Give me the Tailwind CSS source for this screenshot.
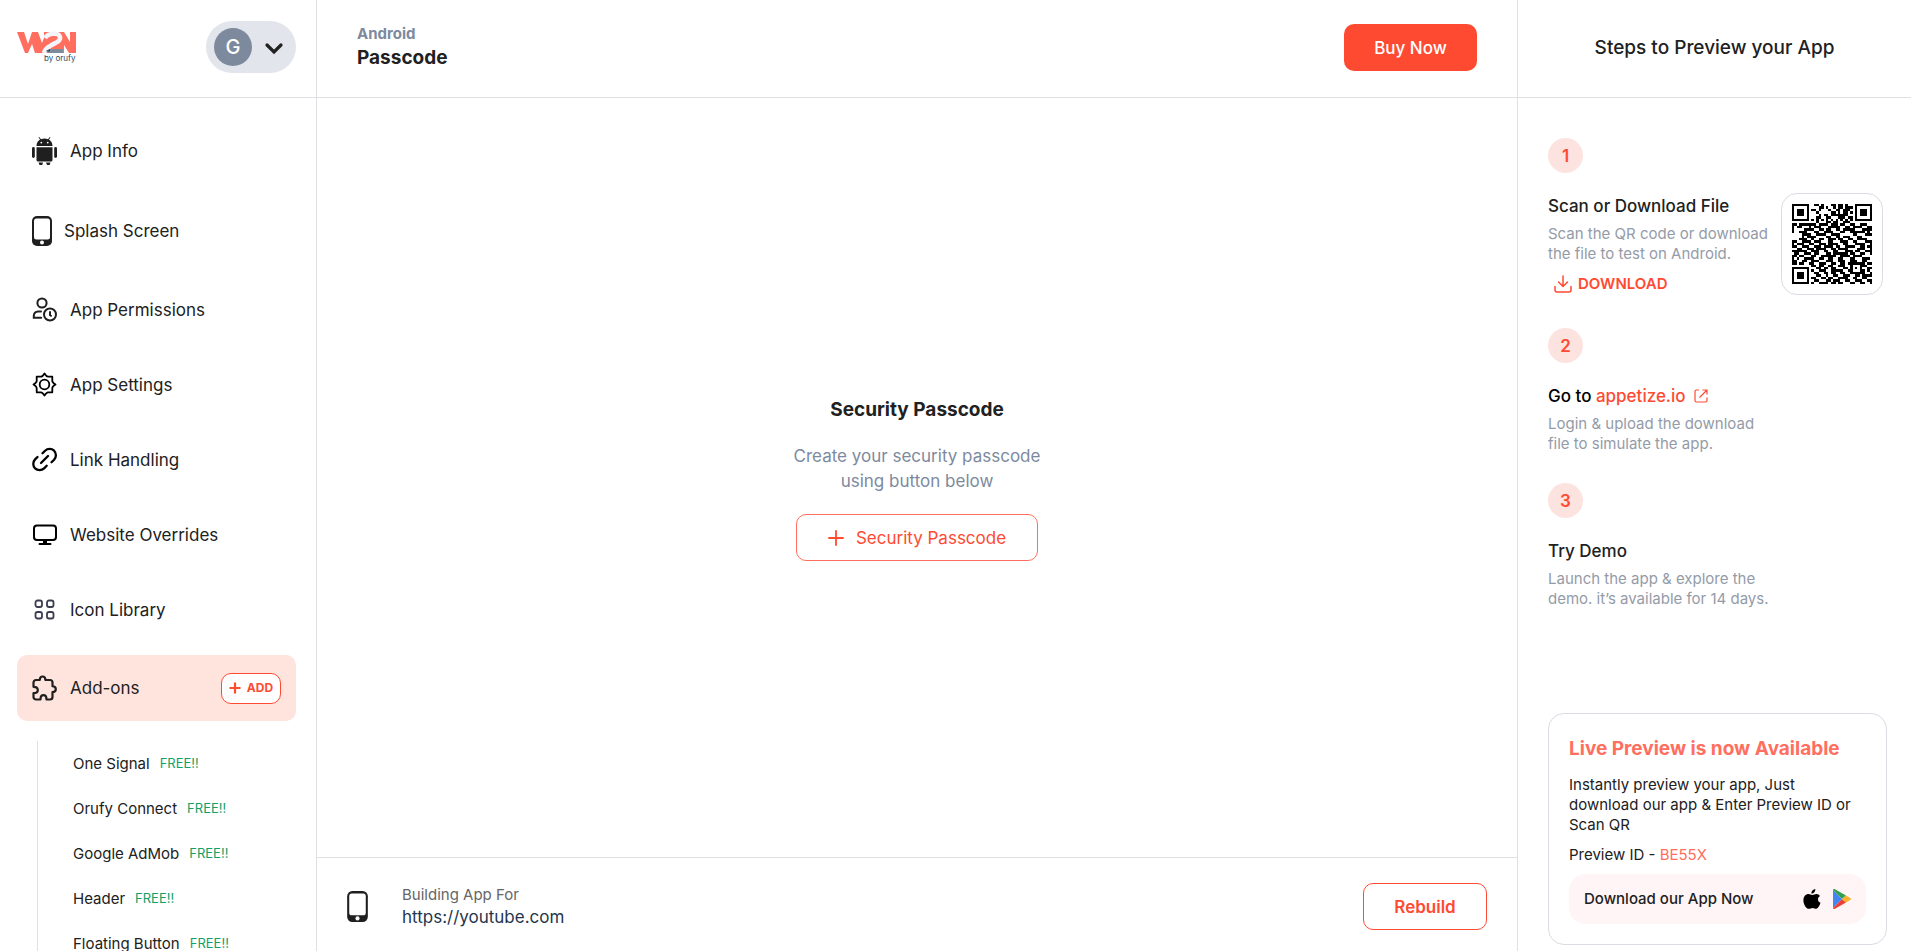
<!DOCTYPE html>
<html lang="en">
<head>
  <meta charset="UTF-8">
  <meta name="viewport" content="width=device-width, initial-scale=1.0">
  <title>Passcode</title>
  <script src="https://cdn.jsdelivr.net/npm/@tailwindcss/browser@4"></script>
</head>
<body class="h-screen overflow-hidden flex bg-white text-[#212121] text-[17px] leading-6 font-['Inter',sans-serif]">

  <!-- Sidebar -->
  <aside class="w-[317px] shrink-0 border-r border-[#dfe0e4] flex flex-col">
    <div class="h-[98px] shrink-0 border-b border-[#dfe0e4] flex items-center justify-between pl-[17px] pr-5 pb-1">
      <a href="#" aria-label="W2N by orufy">
        <svg width="62" height="34" viewBox="0 0 62 34">
          <path fill="#ff6e5e" d="M0 2h7l4 12 4-12h6l4 11 2-5V2h20l6 10V2h6v21h-7l-5-8v8H18l-3-9-4 9H8z"/>
          <path fill="none" stroke="#f4f5fa" stroke-width="4.500" d="M28 8c3-5 14-6 15-1 1 5-6 6-10 9-3 2-5 3-6 7"/>
          <path fill="#7d8b9b" d="M29 21l4-2h13v4H32z"/>
          <path fill="#2b4a63" d="M29 21l4-2v2.500z"/>
          <text x="27" y="31" font-size="8" fill="#2b4a63">by orufy</text>
        </svg>
      </a>
      <button aria-label="Account" class="w-[90px] h-[52px] rounded-full bg-[#e2e5eb] flex items-center justify-between pl-2 pr-3">
        <span class="size-[38px] rounded-full bg-[#7d8a9e] text-white text-xl font-medium flex items-center justify-center">G</span>
        <svg width="20" height="20" viewBox="0 0 20 20" fill="none" stroke="#212121" stroke-width="3.200" stroke-linecap="round"><path d="M3 8l7 7 7-7"/></svg>
      </button>
    </div>

    <nav class="flex-1 pl-[17px] pr-5 pt-4 overflow-hidden">
      <a href="#" class="h-[74px] flex items-center pl-[15px] gap-3">
        <svg width="26" height="28" viewBox="0 0 26 28" fill="#1f1f1f">
          <path d="M4.500 9C4.500 5.500 6.500 3.500 8.100 2.600L6.500.6l.7-.5L9 2.200a9 9 0 0 1 7 0L17.800.1l.7.5-1.600 2C18.500 3.500 20.500 5.500 20.500 9z"/>
          <path d="M4.500 10.200h16V23a1.500 1.500 0 0 1-1.500 1.500H6A1.500 1.500 0 0 1 4.500 23z"/>
          <rect x="0" y="10" width="2.800" height="11" rx="1.400"/><rect x="22.200" y="10" width="2.800" height="11" rx="1.400"/>
          <path d="M6.500 25.500H11l-.8 2.500H7.500zM14 25.500h4.500l-.8 2.500H15z"/>
          <circle cx="9.300" cy="5.600" r=".9" fill="#fff"/><circle cx="15.700" cy="5.600" r=".9" fill="#fff"/>
        </svg>
        App Info
      </a>
      <a href="#" class="h-[84px] flex items-center pl-[15px] gap-3 pt-0.5">
        <svg width="20" height="30" viewBox="0 0 20 30">
          <rect width="20" height="30" rx="5" fill="#1f1f1f"/><rect x="2" y="2.500" width="16" height="21" rx="2.500" fill="#fff"/><circle cx="10" cy="26.500" r="2" fill="#fff"/>
        </svg>
        Splash Screen
      </a>
      <a href="#" class="h-[75px] flex items-center pl-[15px] gap-3">
        <svg width="26" height="26" viewBox="0 0 26 26" fill="none" stroke="#1f1f1f" stroke-width="2" stroke-linecap="round">
          <circle cx="10" cy="6" r="4.600"/><path d="M9 14.500H6C3.400 14.500 1.800 16.500 1.800 18.700v2h7.400"/><circle cx="18" cy="17.500" r="6"/><path d="M18 15V18l1 .8"/>
        </svg>
        App Permissions
      </a>
      <a href="#" class="h-[75px] flex items-center pl-[15px] gap-3">
        <svg width="26" height="26" viewBox="0 0 26 26" fill="none" stroke="#000" stroke-width="1.800" stroke-linejoin="round">
          <path d="M12.500 1.500Q14.500 4.700 16 4.700H20.300V9Q20.300 10.500 23.500 12.500 20.300 14.500 20.300 16V20.300H16Q14.500 20.300 12.500 23.500 10.500 20.300 9 20.300H4.700V16Q4.700 14.500 1.500 12.500 4.700 10.500 4.700 9V4.700H9Q10.500 4.700 12.500 1.500z"/><circle cx="12.500" cy="12.500" r="4.800"/>
        </svg>
        App Settings
      </a>
      <a href="#" class="h-[75px] flex items-center pl-[15px] gap-3">
        <svg width="26" height="26" viewBox="0 0 26 26" fill="none" stroke="#000" stroke-width="2.300" stroke-linecap="round">
          <path d="M9 16l7-7M10.500 6.300l2.600-2.600a6.500 6.500 0 0 1 9 0 6.500 6.500 0 0 1 0 9L19.500 15.300M5.500 10l-2.400 2.400a6.500 6.500 0 0 0 0 9 6.500 6.500 0 0 0 9 0L14.700 18.800"/>
        </svg>
        Link Handling
      </a>
      <a href="#" class="h-[75px] flex items-center pl-[15px] gap-3">
        <svg width="26" height="26" viewBox="0 0 26 26" fill="none" stroke="#000" stroke-width="2" stroke-linecap="round">
          <rect x="2" y="3.500" width="22" height="14.500" rx="3"/><path d="M7.500 22h11"/><path d="M13 19v2.500" stroke-width="4" stroke-linecap="butt"/>
        </svg>
        Website Overrides
      </a>
      <a href="#" class="h-[75px] flex items-center pl-[15px] gap-3">
        <svg width="26" height="26" viewBox="0 0 26 26" fill="none" stroke="#3c3c52" stroke-width="1.800">
          <rect x="3.500" y="3.500" width="6.500" height="6.500" rx="2"/><rect x="15" y="3.500" width="6.500" height="6.500" rx="2"/><rect x="3.500" y="15" width="6.500" height="6.500" rx="2"/><rect x="15" y="15" width="6.500" height="6.500" rx="2"/>
        </svg>
        Icon Library
      </a>
      <div class="mt-2 h-[66px] rounded-[10px] bg-[#ffe4de] flex items-center px-[15px]">
        <a href="#" class="flex-1 flex items-center gap-3">
          <svg width="26" height="26" viewBox="0 0 26 26" fill="none" stroke="#1f1f1f" stroke-width="2.200" stroke-linejoin="round">
            <path d="M7.800 5C7.800 3 8.800 1.500 10.600 1.500S13.400 3 13.400 5H18a2.500 2.500 0 0 1 2.500 2.500v3.700c2 .2 3.300 1.200 3.300 3s-1.300 2.800-3.300 3V22a2.500 2.500 0 0 1-2.500 2.500h-3.500c0-2.800-1-4.300-3-4.300s-3 1.500-3 4.300H4A2.500 2.500 0 0 1 1.500 22v-3.800c2.800 0 4.300-1.200 4.300-3.200s-1.500-3.200-4.300-3.200V7.500A2.500 2.500 0 0 1 4 5z"/>
          </svg>
          Add-ons
        </a>
        <button class="w-[60px] h-[31px] rounded-[10px] border border-[#ff4a32] bg-white text-[#ff4a32] text-xs font-bold flex items-center justify-center gap-1.5">
          <svg width="12" height="12" viewBox="0 0 12 12" stroke="#ff4a32" stroke-width="2.200"><path d="M6 .5v11M.5 6h11"/></svg>
          ADD
        </button>
      </div>
      <ul class="mt-5 ml-5 border-l border-[#dfe0e4] pl-[35px] text-[15px]">
        <li class="h-[45px] flex items-center gap-2.5">One Signal <span class="text-[13px] text-[#12a066] pb-0.5">FREE!!</span></li>
        <li class="h-[45px] flex items-center gap-2.5">Orufy Connect <span class="text-[13px] text-[#12a066] pb-0.5">FREE!!</span></li>
        <li class="h-[45px] flex items-center gap-2.5">Google AdMob <span class="text-[13px] text-[#12a066] pb-0.5">FREE!!</span></li>
        <li class="h-[45px] flex items-center gap-2.5">Header <span class="text-[13px] text-[#12a066] pb-0.5">FREE!!</span></li>
        <li class="h-[45px] flex items-center gap-2.5">Floating Button <span class="text-[13px] text-[#12a066] pb-0.5">FREE!!</span></li>
      </ul>
    </nav>
  </aside>

  <!-- Main -->
  <main class="flex-1 min-w-0 flex flex-col">
    <header class="h-[98px] shrink-0 border-b border-[#dfe0e4] flex items-center justify-between px-10 pb-0.5">
      <div class="pb-1">
        <p class="text-[15px] font-bold leading-6 text-[#7d8a9e]">Android</p>
        <h1 class="text-[19px] font-bold leading-6">Passcode</h1>
      </div>
      <button class="w-[133px] h-[47px] rounded-[10px] bg-[#ff4a32] text-white font-medium">Buy Now</button>
    </header>

    <section class="flex-1 flex flex-col items-center justify-center text-center pt-0.5">
      <h2 class="text-[19px] font-bold leading-7">Security Passcode</h2>
      <p class="mt-5 w-[270px] leading-[25px] text-[#7d8a9e]">Create your security passcode using button below</p>
      <button class="mt-5 w-[242px] h-[47px] rounded-[10px] border border-[#ff6e5e] text-[#ff4a32] flex items-center justify-center gap-3">
        <svg width="16" height="16" viewBox="0 0 16 16" stroke="#ff4a32" stroke-width="1.800" stroke-linecap="round"><path d="M8 1v14M1 8h14"/></svg>
        Security Passcode
      </button>
    </section>

    <footer class="h-[94px] shrink-0 border-t border-[#dfe0e4] flex items-center px-[30px] pt-1">
      <svg width="21" height="31" viewBox="0 0 20 30">
        <rect width="20" height="30" rx="5" fill="#1f1f1f"/><rect x="2" y="2.500" width="16" height="21" rx="2.500" fill="#fff"/><circle cx="10" cy="26.500" r="2" fill="#fff"/>
      </svg>
      <div class="ml-[34px] flex-1 pb-0.5">
        <p class="text-[15px] leading-[22px] text-[#666]">Building App For</p>
        <p class="leading-[22px] text-[#24364d]">https://youtube.com</p>
      </div>
      <button class="w-[124px] h-[47px] rounded-[10px] border border-[#ff4a32] text-[#ff4a32] font-semibold">Rebuild</button>
    </footer>
  </main>

  <!-- Preview steps -->
  <aside class="w-[394px] shrink-0 border-l border-[#dfe0e4] flex flex-col">
    <div class="h-[98px] shrink-0 border-b border-[#dfe0e4] flex items-center justify-center pb-0.5">
      <h2 class="text-[19px] font-medium">Steps to Preview your App</h2>
    </div>
    <div class="flex-1 flex flex-col pl-[30px] pr-6 pt-10 pb-1.5">
      <div>
        <span class="size-[35px] rounded-full bg-[#fde3df] text-[#ff4a32] font-semibold flex items-center justify-center">1</span>
        <div class="flex mt-5">
          <div class="w-[233px]">
            <h3 class="font-medium leading-[26px]">Scan or Download File</h3>
            <p class="mt-[5px] text-[15px] leading-5 text-[#949ba8] whitespace-nowrap">Scan the QR code or download<br>the file to test on Android.</p>
            <a href="#" class="mt-2 ml-1.5 flex items-center gap-1.5 text-[15px] leading-6 font-semibold text-[#ff4a32]">
              <svg width="18" height="18" viewBox="0 0 18 18" fill="none" stroke="#ff4a32" stroke-width="1.500" stroke-linecap="round" stroke-linejoin="round"><path d="M9 1v10M4.500 7L9 11.500 13.500 7M1 11.500V15a2 2 0 0 0 2 2h12a2 2 0 0 0 2-2v-3.500"/></svg>
              DOWNLOAD
            </a>
          </div>
          <div class="size-[102px] shrink-0 rounded-2xl border border-[#d9dce3] flex items-center justify-center">
            <svg id="qr" width="80" height="80" viewBox="0 0 33 33" shape-rendering="crispEdges" role="img" aria-label="QR code"></svg>
          </div>
        </div>
      </div>
      <div class="mt-8">
        <span class="size-[35px] rounded-full bg-[#fde3df] text-[#ff4a32] font-semibold flex items-center justify-center">2</span>
        <h3 class="mt-5 font-medium leading-[26px] text-black flex items-center">Go to&nbsp;<a href="#" class="text-[#ff4a32] flex items-center gap-2">appetize.io
          <svg width="14" height="14" viewBox="0 0 14 14" fill="none" stroke="#ff4a32" stroke-width="1.200"><path d="M5 1H2.500A1.500 1.500 0 0 0 1 2.500v9A1.500 1.500 0 0 0 2.500 13h9a1.500 1.500 0 0 0 1.500-1.500V8.500M8.500 1H13v4.500M13 1L5.500 8.500"/></svg></a></h3>
        <p class="mt-[5px] text-[15px] leading-5 text-[#949ba8]">Login &amp; upload the download<br>file to simulate the app.</p>
      </div>
      <div class="mt-[29px]">
        <span class="size-[35px] rounded-full bg-[#fde3df] text-[#ff4a32] font-semibold flex items-center justify-center">3</span>
        <h3 class="mt-5 font-medium leading-[26px]">Try Demo</h3>
        <p class="mt-[5px] text-[15px] leading-5 text-[#949ba8]">Launch the app &amp; explore the<br>demo. it’s available for 14 days.</p>
      </div>

      <div class="mt-auto rounded-2xl border border-[#d9dce3] p-5">
        <h2 class="text-[19px] font-bold leading-[30px] text-[#ff6e5e]">Live Preview is now Available</h2>
        <p class="mt-[11px] text-[15px] leading-5 whitespace-nowrap">Instantly preview your app, Just<br>download our app &amp; Enter Preview ID or<br>Scan QR</p>
        <p class="mt-2.5 text-[15px] leading-5">Preview ID - <span class="text-[#ff6e5e]">BE55X</span></p>
        <a href="#" class="mt-[9px] h-[50px] rounded-2xl bg-[#fff5f6] flex items-center px-[15px] text-[15px] font-medium">
          <span class="flex-1">Download our App Now</span>
          <svg width="18" height="20" viewBox="0 0 18 20"><path d="M12.300 0c.2 1.200-.3 2.400-1 3.200-.7.900-1.800 1.500-2.900 1.400-.2-1.100.3-2.300 1-3.100C10.100.7 11.300.1 12.300 0zM17 6.900c-1.300.8-2 1.900-2 3.300 0 1.600 1 3 2.500 3.600-.6 2-2.200 5.600-4.300 5.900-1.200.1-2-.8-3.600-.8-1.700 0-2.300.8-3.600.9C3.100 20 .4 15.300.4 11.200c0-4 2.600-6.100 5-6.100 1.600 0 2.600.9 4 .9 1.300 0 2.300-1 4.200-1 1.300 0 2.600.8 3.400 1.900z"/></svg>
          <svg class="ml-3" width="18" height="20" viewBox="0 0 18 20"><path fill="#4285f4" d="M0 1v18l9-9z"/><path fill="#34a04f" d="M0 1c0-1 1-1.300 2-.8L13 6.500 9 10z"/><path fill="#ea4335" d="M0 19c0 1 1 1.300 2 .8l11-6.300L9 10z"/><path fill="#fbb12e" d="M13 6.500l4.300 2.500c.9.500.9 1.500 0 2L13 13.500 9 10z"/></svg>
        </a>
      </div>
    </div>
  </aside>

  <script>
    // QR modules, one string per row
    const rows = [
      '111111100110100011011010001111111',
      '100000100001101001011011101000001',
      '101110101101000100110111001011101',
      '101110100010000011010110101011101',
      '101110100001011011111110001011101',
      '100000100011001100011101101000001',
      '111111101010101010101010101111111',
      '000000000010001101100111000000000',
      '110111111101111011101100110011100',
      '101100010111000111110011011110011',
      '100001111001101100110111110001111',
      '100111000110011110001100111111010',
      '000011110011110011110000011000111',
      '000010111100001100110111000110000',
      '000111001001100111011001100111100',
      '110011110111000110001110011000111',
      '101110011001110111100110001111001',
      '110011100111011110110011110011011',
      '001100111011110011011110000111001',
      '111111001110011001100011101100111',
      '011001110110001101111110110011001',
      '110110001100111111001111011110000',
      '101001111001100110011000110001110',
      '110011001110001110011100111001100',
      '110110011001110011001101111111011',
      '000000001101100110011100100011100',
      '111111100011011011000110101010011',
      '100000101001110011111001100011010',
      '101110100110011011001100111111001',
      '101110100011001001100111001101111',
      '101110101100110110011110011001100',
      '100000100110001101110011001110011',
      '111111101001111011011000110011001'
    ];
    let d = '';
    rows.forEach((row, y) => {
      [...row].forEach((cell, x) => {
        if (cell === '1') d += `M${x} ${y}h1v1h-1z`;
      });
    });
    const path = document.createElementNS('http://www.w3.org/2000/svg', 'path');
    path.setAttribute('d', d);
    document.getElementById('qr').appendChild(path);
  </script>
</body>
</html>
